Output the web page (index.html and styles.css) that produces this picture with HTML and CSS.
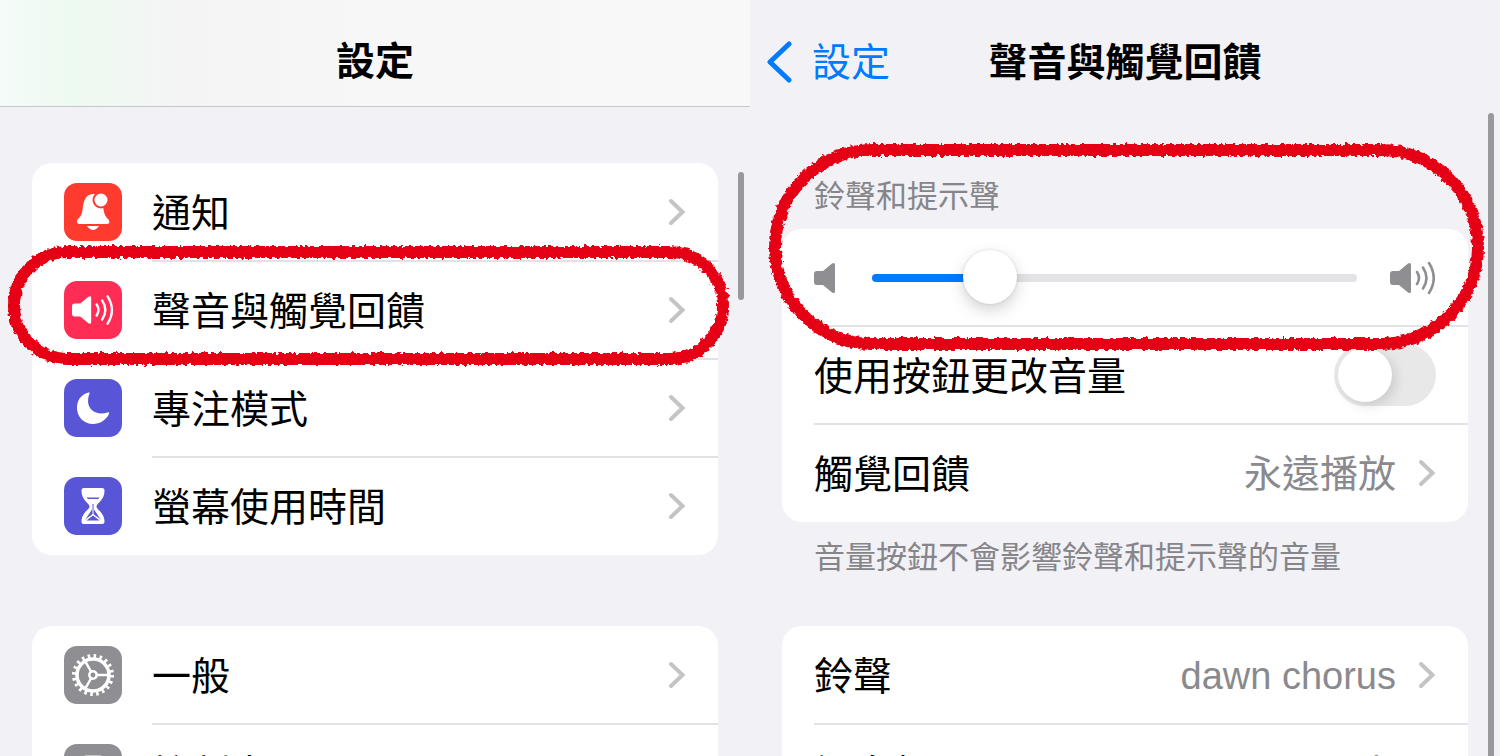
FILE: index.html
```
<!DOCTYPE html>
<html lang="zh-Hant">
<head>
    <meta charset="UTF-8">
    <meta name="viewport" content="width=device-width, initial-scale=1.0">
    <title>設定</title>
    <link rel="stylesheet" href="styles.css">
</head>
<body>
    <svg class="defs" aria-hidden="true">
        <filter id="crayon" x="-5%" y="-10%" width="110%" height="120%">
            <feTurbulence type="fractalNoise" baseFrequency="0.25" numOctaves="2" seed="4" result="noise"/>
            <feDisplacementMap in="SourceGraphic" in2="noise" scale="6" xChannelSelector="R" yChannelSelector="G"/>
        </filter>
        <symbol id="chevron" viewBox="0 0 18 28">
            <path d="M3 3l11.500 11L3 25" fill="none" stroke="#c4c4c6" stroke-width="4" stroke-linecap="round" stroke-linejoin="miter"/>
        </symbol>
        <symbol id="speaker" viewBox="0 0 46 34">
            <path d="M3 10h6L18 2.500Q21 1 21 3.500v27Q21 33 18 31.500L9 24H3Q0 24 0 21v-8Q0 10 3 10z" fill="currentColor"/>
        </symbol>
        <symbol id="speaker-waves" viewBox="0 0 46 34">
            <use href="#speaker" width="46" height="34"/>
            <path d="M27 11q4 6 0 12M33 6.500q7 10.500 0 21M39 2q9.500 15 0 30" fill="none" stroke="currentColor" stroke-width="2.600" stroke-linecap="round"/>
        </symbol>
    </svg>

    <main class="screens">
        <section class="screen">
            <header class="navbar blurred">
                <h1>設定</h1>
            </header>
            <div class="card first">
                <a class="row" href="#">
                    <span class="icon red">
                        <svg viewBox="0 0 58 58">
                            <path d="M29 11c-6 0-9 5-10 12-1 9-2 10-5 13-2 2-1 5 1 5h28c3 0 3-3 1-5-3-3-4-5-5-13-1-7-4-12-10-12z" fill="#fff"/>
                            <path d="M23 43h12q-6 8-12 0z" fill="#fff"/>
                            <circle cx="37" cy="17" r="7.500" fill="#fff" stroke="#ff3b30" stroke-width="2"/>
                        </svg>
                    </span>
                    <span class="label">通知</span>
                    <svg class="chevron"><use href="#chevron"/></svg>
                </a>
                <a class="row" href="#">
                    <span class="icon pink">
                        <svg class="sound" viewBox="0 0 46 34"><use href="#speaker-waves"/></svg>
                    </span>
                    <span class="label">聲音與觸覺回饋</span>
                    <svg class="chevron"><use href="#chevron"/></svg>
                    <span class="ring ring-row"></span>
                </a>
                <a class="row" href="#">
                    <span class="icon indigo">
                        <svg viewBox="0 0 58 58">
                            <path d="M24.500 13.500C16 16 13 22 13 29c0 9 7 16 16 16 7 0 13-4 16-10 .5-1.500-.5-2-1.500-1.500C33 37 24 31 24 22q0-4 1.500-7.500c.4-1-.2-1.300-1-1z" fill="#fff"/>
                        </svg>
                    </span>
                    <span class="label">專注模式</span>
                    <svg class="chevron"><use href="#chevron"/></svg>
                </a>
                <a class="row" href="#">
                    <span class="icon indigo">
                        <svg viewBox="0 0 58 58">
                            <path d="M20 11h18q2.500 0 2.500 2.500C40.500 22 35 25 33 28q-1 1.500 0 3c2 3 7.500 6 7.500 13.500Q40.500 47 38 47H20q-2.500 0-2.500-2.500C17.500 37 23 34 25 31q1-1.500 0-3c-2-3-7.500-6-7.500-14.500Q17.500 11 20 11z" fill="#fff"/>
                            <path d="M22.500 20.500h13L30 26.500v6l7 10.500H21l7-10.500v-6z" fill="#5856d6"/>
                            <path d="M24.500 22.500h9L29 27zM29 26v11M20.500 44c2-3 6-4 8.500-7 2.500 3 6.500 4 8.500 7z" fill="#fff" stroke="#fff" stroke-width="1"/>
                            <path d="M22.500 43.500l6.500-5 6.500 5z" fill="#5856d6"/>
                        </svg>
                    </span>
                    <span class="label">螢幕使用時間</span>
                    <svg class="chevron"><use href="#chevron"/></svg>
                </a>
            </div>
            <div class="card">
                <a class="row" href="#">
                    <span class="icon gray">
                        <svg viewBox="0 0 58 58" fill="none" stroke="#fff">
                            <circle cx="29" cy="29" r="19" stroke-width="4" stroke-dasharray="2.600 3.369"/>
                            <circle cx="29" cy="29" r="16" stroke-width="3.500"/>
                            <circle cx="29" cy="29" r="3.700" stroke-width="2.500"/>
                            <path d="M33 29h12M27 25.500l-6.500-11.300M27 32.500l-6.500 11.300" stroke-width="2.500"/>
                        </svg>
                    </span>
                    <span class="label">一般</span>
                    <svg class="chevron"><use href="#chevron"/></svg>
                </a>
                <a class="row" href="#">
                    <span class="icon gray">
                        <svg viewBox="0 0 58 58" fill="none" stroke="#fff" stroke-width="3">
                            <rect x="16" y="13" width="26" height="13" rx="6.500"/>
                            <rect x="16" y="32" width="26" height="13" rx="6.500"/>
                        </svg>
                    </span>
                    <span class="label">控制中心</span>
                    <svg class="chevron"><use href="#chevron"/></svg>
                </a>
            </div>
            <div class="scrollbar scrollbar-short"></div>
        </section>

        <section class="screen">
            <header class="navbar">
                <a class="back" href="#">
                    <svg viewBox="0 0 26 42"><path d="M23 3L4 21l19 18" fill="none" stroke="currentColor" stroke-width="5" stroke-linecap="round" stroke-linejoin="round"/></svg>
                    設定
                </a>
                <h1>聲音與觸覺回饋</h1>
            </header>
            <div class="volume-group">
                <label class="caption" for="volume">鈴聲和提示聲</label>
                <div class="card">
                    <div class="row">
                        <svg class="speaker"><use href="#speaker"/></svg>
                        <input type="range" id="volume" class="slider" min="0" max="100" value="21">
                        <svg class="speaker"><use href="#speaker-waves"/></svg>
                    </div>
                    <div class="row">
                        <label class="label" for="buttons">使用按鈕更改音量</label>
                        <input type="checkbox" id="buttons" class="toggle">
                    </div>
                    <a class="row" href="#">
                        <span class="label">觸覺回饋</span>
                        <span class="value">永遠播放</span>
                        <svg class="chevron"><use href="#chevron"/></svg>
                    </a>
                </div>
                <p class="caption note">音量按鈕不會影響鈴聲和提示聲的音量</p>
                <span class="ring ring-volume"></span>
            </div>
            <div class="card">
                <a class="row" href="#">
                    <span class="label">鈴聲</span>
                    <span class="value">dawn chorus</span>
                    <svg class="chevron"><use href="#chevron"/></svg>
                </a>
                <a class="row" href="#">
                    <span class="label">訊息聲</span>
                    <span class="value">三全音</span>
                    <svg class="chevron"><use href="#chevron"/></svg>
                </a>
            </div>
            <div class="scrollbar scrollbar-long"></div>
        </section>
    </main>
</body>
</html>
```
FILE: styles.css
```
* {
    box-sizing: border-box;
}

body {
    font-family: Inter, "Noto Sans CJK TC", sans-serif;
    font-size: 39px;
    line-height: 56px;
    background-color: #f2f1f6;
    color: #000;
    margin: 0;
}

a {
    color: inherit;
    text-decoration: none;
}

.defs {
    position: absolute;
    width: 0;
    height: 0;
}

.screens {
    display: grid;
    grid-template-columns: 1fr 1fr;
    height: 100vh;
    overflow: hidden;
}

.screen {
    position: relative;
    min-width: 0;
}

/* Navigation bar */
.navbar {
    display: grid;
    grid-template-columns: 1fr auto 1fr;
    align-items: center;
    height: 107px;
    padding: 16px 16px 0;
}

.navbar.blurred {
    background: linear-gradient(90deg, #f4fbf9 0%, #edfaf0 10%, #f0f8f3 16%, #f4f4f4 24%, #f7f7f7 50%, #f8f8f8 100%);
    border-bottom: 1px solid #c8c8cb;
}

.navbar h1 {
    grid-column: 2;
    font-size: 39px;
    font-weight: 700;
    line-height: 56px;
    margin: 0;
}

.back {
    display: flex;
    align-items: center;
    gap: 20px;
    color: #007aff;
}

.back svg {
    width: 26px;
    height: 42px;
}

/* Cards and rows */
.card {
    margin: 0 32px 71px;
    background-color: #fff;
    border-radius: 20px;
}

.card.first {
    margin-top: 56px;
}

.row {
    position: relative;
    display: flex;
    align-items: center;
    height: 98px;
    padding-right: 32px;
    padding-left: 32px;
}

.row + .row::before {
    content: "";
    position: absolute;
    top: -1px;
    right: 0;
    left: 32px;
    height: 2px;
    background-color: #e2e2e4;
}

.row:has(.icon)::before {
    left: 120px;
}

.label,
.value {
    padding-top: 2px;
}

.label {
    flex: 1;
}

.value {
    font-family: "Liberation Sans", "Noto Sans CJK TC", sans-serif;
    font-size: 38px;
    color: #8a8a8e;
}

.chevron {
    width: 18px;
    height: 28px;
    margin-left: 22px;
}

.icon {
    display: flex;
    align-items: center;
    justify-content: center;
    width: 58px;
    height: 58px;
    margin-right: 30px;
    border-radius: 13px;
    color: #fff;
}

.icon svg {
    width: 58px;
    height: 58px;
}

.icon .sound {
    width: 42px;
    height: 32px;
}

.red { background-color: #ff3b30; }
.pink { background-color: #ff2d55; }
.indigo { background-color: #5856d6; }
.gray { background-color: #8e8e93; }

/* Volume */
.volume-group {
    position: relative;
    padding-top: 61px;
}

.volume-group .card {
    margin-bottom: 7px;
}

.volume-group .row:first-child {
    height: 97px;
}

.caption {
    display: block;
    margin: 0 64px 5px;
    font-size: 31px;
    color: #85858a;
}

.note {
    margin-bottom: 41px;
}

.speaker {
    width: 46px;
    height: 34px;
    color: #8e8e93;
}

.slider {
    appearance: none;
    flex: 1;
    min-width: 0;
    height: 54px;
    margin: 0 33px 0 12px;
    background: none;
}

.slider::-webkit-slider-runnable-track {
    height: 8px;
    border-radius: 4px;
    background: linear-gradient(90deg, #007aff 24%, #e3e3e5 24%);
}

.slider::-webkit-slider-thumb {
    appearance: none;
    width: 54px;
    height: 54px;
    margin-top: -24px;
    border-radius: 50%;
    background-color: #fff;
    box-shadow: 0 6px 16px rgba(0, 0, 0, 0.18), 0 0 3px rgba(0, 0, 0, 0.12);
}

.toggle {
    appearance: none;
    width: 102px;
    height: 62px;
    margin: 0;
    padding: 4px;
    border-radius: 31px;
    background-color: #e8e8e9;
}

.toggle::before {
    content: "";
    display: block;
    width: 54px;
    height: 54px;
    border-radius: 50%;
    background-color: #fff;
    box-shadow: 4px 4px 12px rgba(0, 0, 0, 0.12);
}

.toggle:checked {
    background-color: #34c759;
}

.toggle:checked::before {
    margin-left: 40px;
}

/* Hand drawn rings */
.ring {
    position: absolute;
    z-index: 1;
    border: 12px solid #e60012;
    border-radius: 103px;
    filter: url(#crayon);
    pointer-events: none;
}

.ring-row {
    top: -15px;
    right: -11px;
    bottom: -6px;
    left: -24px;
}

.ring-volume {
    top: 37px;
    right: 16px;
    left: 19px;
    height: 206px;
}

.scrollbar {
    position: absolute;
    right: 6px;
    width: 6px;
    border-radius: 3px;
    background-color: #99999d;
}

.scrollbar-short {
    top: 172px;
    height: 128px;
}

.scrollbar-long {
    top: 113px;
    bottom: -10px;
}
```
